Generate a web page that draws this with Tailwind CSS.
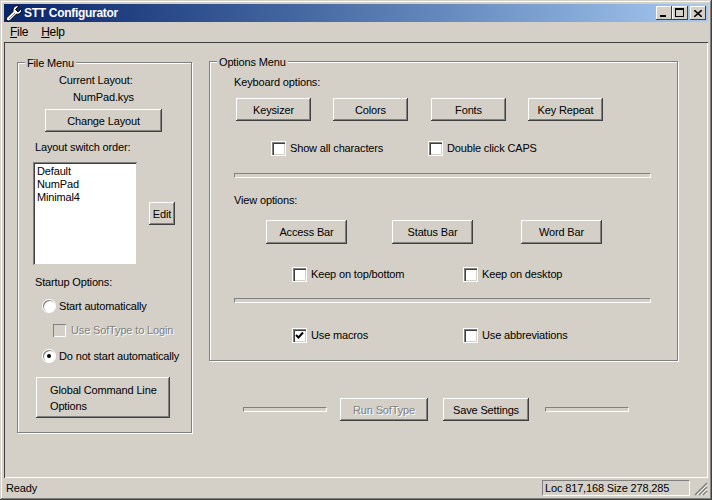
<!DOCTYPE html>
<html lang="en">
<head>
  <meta charset="UTF-8">
  <title>STT Configurator</title>
  <script src="https://cdn.jsdelivr.net/npm/@tailwindcss/browser@4"></script>
</head>
<body class="bg-[#d4d0c8] overflow-hidden">
<div class="w-[712px] h-[500px] flex flex-col p-[4px] bg-[#d4d0c8] text-black text-[11px] tracking-[-0.15px] leading-[16px] font-['Liberation_Sans',sans-serif] shadow-[inset_-1px_-1px_0_#404040,inset_1px_1px_0_#d4d0c8,inset_-2px_-2px_0_#808080,inset_2px_2px_0_#fff]">

  <!-- title bar -->
  <div class="h-[18px] flex items-center bg-gradient-to-r from-[#0a246a] to-[#a6caf0]">
    <svg class="w-[16px] h-[17px] ml-[2px]" viewBox="0 0 16 17">
      <path d="M15.500 3.500L12 7 9.500 4.500 13 1C10 0 6.500 2 7 6.500L1 12.500C-.5 14 1.500 17 4 15.500L10.500 9C13.500 10 16.500 7 15.500 3.500z" fill="#fff" stroke="#000" stroke-width="1"/>
      <path d="M3 14l6-6" stroke="#808080" stroke-width="1"/>
    </svg>
    <span class="ml-[2px] text-white font-bold text-[12px] tracking-[-0.3px]">STT Configurator</span>
    <div class="ml-auto mr-[2px] flex">
      <div class="w-[16px] h-[14px] flex items-end pl-[4px] pb-[3px] bg-[#d4d0c8] shadow-[inset_-1px_-1px_0_#404040,inset_1px_1px_0_#fff]"><div class="w-[6px] h-[2px] bg-black"></div></div>
      <div class="w-[16px] h-[14px] pt-[2px] pl-[3px] bg-[#d4d0c8] shadow-[inset_-1px_-1px_0_#404040,inset_1px_1px_0_#fff]"><div class="w-[9px] h-[9px] border border-black border-t-2"></div></div>
      <div class="ml-[2px] w-[16px] h-[14px] flex items-center justify-center bg-[#d4d0c8] shadow-[inset_-1px_-1px_0_#404040,inset_1px_1px_0_#fff]">
        <svg class="w-[8px] h-[7px]" viewBox="0 0 8 7"><path d="M0 0l8 7M8 0L0 7" stroke="#000" stroke-width="1.600"/></svg>
      </div>
    </div>
  </div>

  <!-- menu -->
  <div class="h-[20px] flex items-center pl-[6px] gap-[13px] text-[12px] tracking-[-0.3px]">
    <span><u>F</u>ile</span>
    <span><u>H</u>elp</span>
  </div>

  <!-- client area -->
  <div class="flex-1 flex items-start pl-[13px] shadow-[inset_1px_1px_0_#404040,inset_-1px_-1px_0_#fff]">

    <!-- File Menu -->
    <div class="relative mt-[20px] w-[175px] h-[371px] shrink-0 flex flex-col border border-[#808080] shadow-[inset_1px_1px_0_#fff,1px_1px_0_#fff]">
      <span class="absolute left-[7px] top-[-8px] px-[2px] bg-[#d4d0c8]">File Menu</span>
      <div class="mt-[9px] pl-[41px]">Current Layout:</div>
      <div class="mt-[1px] pl-[55px]">NumPad.kys</div>
      <button class="mt-[4px] ml-[27px] w-[117px] h-[23px] bg-[#d4d0c8] shadow-[inset_-1px_-1px_0_#404040,inset_1px_1px_0_#fff,inset_-2px_-2px_0_#808080]">Change Layout</button>
      <div class="mt-[7px] pl-[17px]">Layout switch order:</div>
      <div class="mt-[7px] flex items-center">
        <div class="ml-[15px] w-[104px] h-[103px] bg-white px-[4px] py-[3px] leading-[13px] shadow-[inset_1px_1px_0_#808080,inset_-1px_-1px_0_#d4d0c8,inset_2px_2px_0_#404040]">
          <div>Default</div>
          <div>NumPad</div>
          <div>Minimal4</div>
        </div>
        <button class="ml-[12px] w-[26px] h-[23px] bg-[#d4d0c8] shadow-[inset_-1px_-1px_0_#404040,inset_1px_1px_0_#fff,inset_-2px_-2px_0_#808080]">Edit</button>
      </div>
      <div class="mt-[9px] pl-[17px]">Startup Options:</div>
      <div class="mt-[8px] ml-[25px] flex items-center gap-[4px]">
        <div class="w-[12px] h-[12px] rounded-full bg-white shadow-[inset_1px_1px_0_#808080,0_0_0_1px_#fff]"></div>
        <span>Start automatically</span>
      </div>
      <div class="mt-[8px] ml-[35px] flex items-center gap-[5px] text-[#808080] [text-shadow:1px_1px_0_#fff]">
        <div class="w-[13px] h-[13px] bg-[#d4d0c8] shadow-[inset_1px_1px_0_#808080,inset_-1px_-1px_0_#fff]"></div>
        <span>Use SofType to Login</span>
      </div>
      <div class="mt-[10px] ml-[25px] flex items-center gap-[4px]">
        <div class="w-[12px] h-[12px] flex items-center justify-center rounded-full bg-white shadow-[inset_1px_1px_0_#808080,0_0_0_1px_#fff]"><div class="w-[4px] h-[4px] rounded-full bg-black"></div></div>
        <span>Do not start automatically</span>
      </div>
      <button class="mt-[13px] ml-[18px] w-[134px] h-[41px] pl-[14px] text-left bg-[#d4d0c8] shadow-[inset_-1px_-1px_0_#404040,inset_1px_1px_0_#fff,inset_-2px_-2px_0_#808080]">Global Command Line<br>Options</button>
    </div>

    <!-- right column -->
    <div class="ml-[17px] mt-[19px] flex flex-col">
      <div class="relative w-[469px] h-[300px] flex flex-col border border-[#808080] shadow-[inset_1px_1px_0_#fff,1px_1px_0_#fff]">
        <span class="absolute left-[7px] top-[-8px] px-[2px] bg-[#d4d0c8]">Options Menu</span>

        <div class="mt-[12px] pl-[24px]">Keyboard options:</div>
        <div class="mt-[8px] ml-[26px] flex">
          <button class="w-[75px] h-[23px] bg-[#d4d0c8] shadow-[inset_-1px_-1px_0_#404040,inset_1px_1px_0_#fff,inset_-2px_-2px_0_#808080]">Keysizer</button>
          <button class="ml-[22px] w-[75px] h-[23px] bg-[#d4d0c8] shadow-[inset_-1px_-1px_0_#404040,inset_1px_1px_0_#fff,inset_-2px_-2px_0_#808080]">Colors</button>
          <button class="ml-[23px] w-[75px] h-[23px] bg-[#d4d0c8] shadow-[inset_-1px_-1px_0_#404040,inset_1px_1px_0_#fff,inset_-2px_-2px_0_#808080]">Fonts</button>
          <button class="ml-[22px] w-[75px] h-[23px] bg-[#d4d0c8] shadow-[inset_-1px_-1px_0_#404040,inset_1px_1px_0_#fff,inset_-2px_-2px_0_#808080]">Key Repeat</button>
        </div>
        <div class="mt-[19px] ml-[62px] flex items-center">
          <div class="w-[13px] h-[13px] bg-white shadow-[inset_1px_1px_0_#808080,inset_2px_2px_0_#404040,inset_-1px_-1px_0_#d4d0c8,0_0_0_1px_#fff]"></div>
          <span class="ml-[5px] w-[139px]">Show all characters</span>
          <div class="w-[13px] h-[13px] bg-white shadow-[inset_1px_1px_0_#808080,inset_2px_2px_0_#404040,inset_-1px_-1px_0_#d4d0c8,0_0_0_1px_#fff]"></div>
          <span class="ml-[5px]">Double click CAPS</span>
        </div>
        <div class="mt-[17px] ml-[24px] w-[417px] h-[5px] border border-t-[#808080] border-l-[#808080] border-b-white border-r-white"></div>

        <div class="mt-[14px] pl-[24px]">View options:</div>
        <div class="mt-[12px] ml-[56px] flex">
          <button class="w-[81px] h-[24px] bg-[#d4d0c8] shadow-[inset_-1px_-1px_0_#404040,inset_1px_1px_0_#fff,inset_-2px_-2px_0_#808080]">Access Bar</button>
          <button class="ml-[45px] w-[81px] h-[24px] bg-[#d4d0c8] shadow-[inset_-1px_-1px_0_#404040,inset_1px_1px_0_#fff,inset_-2px_-2px_0_#808080]">Status Bar</button>
          <button class="ml-[48px] w-[81px] h-[24px] bg-[#d4d0c8] shadow-[inset_-1px_-1px_0_#404040,inset_1px_1px_0_#fff,inset_-2px_-2px_0_#808080]">Word Bar</button>
        </div>
        <div class="mt-[22px] ml-[83px] flex items-center">
          <div class="w-[13px] h-[13px] bg-white shadow-[inset_1px_1px_0_#808080,inset_2px_2px_0_#404040,inset_-1px_-1px_0_#d4d0c8,0_0_0_1px_#fff]"></div>
          <span class="ml-[5px] w-[153px]">Keep on top/bottom</span>
          <div class="w-[13px] h-[13px] bg-white shadow-[inset_1px_1px_0_#808080,inset_2px_2px_0_#404040,inset_-1px_-1px_0_#d4d0c8,0_0_0_1px_#fff]"></div>
          <span class="ml-[5px]">Keep on desktop</span>
        </div>
        <div class="mt-[16px] ml-[24px] w-[417px] h-[5px] border border-t-[#808080] border-l-[#808080] border-b-white border-r-white"></div>
        <div class="mt-[24px] ml-[83px] flex items-center">
          <div class="w-[13px] h-[13px] flex items-center justify-center bg-white shadow-[inset_1px_1px_0_#808080,inset_2px_2px_0_#404040,inset_-1px_-1px_0_#d4d0c8,0_0_0_1px_#fff]">
            <svg class="w-[9px] h-[9px]" viewBox="0 0 9 9"><path d="M1 4l2.500 2.500L8 1.500" fill="none" stroke="#000" stroke-width="2"/></svg>
          </div>
          <span class="ml-[5px] w-[153px]">Use macros</span>
          <div class="w-[13px] h-[13px] bg-white shadow-[inset_1px_1px_0_#808080,inset_2px_2px_0_#404040,inset_-1px_-1px_0_#d4d0c8,0_0_0_1px_#fff]"></div>
          <span class="ml-[5px]">Use abbreviations</span>
        </div>
      </div>

      <!-- bottom row -->
      <div class="mt-[37px] ml-[34px] flex items-center">
        <div class="w-[84px] h-[5px] border border-t-[#808080] border-l-[#808080] border-b-white border-r-white"></div>
        <button class="ml-[13px] w-[88px] h-[23px] text-[#808080] [text-shadow:1px_1px_0_#fff] bg-[#d4d0c8] shadow-[inset_-1px_-1px_0_#404040,inset_1px_1px_0_#fff,inset_-2px_-2px_0_#808080]">Run SofType</button>
        <button class="ml-[15px] w-[86px] h-[23px] bg-[#d4d0c8] shadow-[inset_-1px_-1px_0_#404040,inset_1px_1px_0_#fff,inset_-2px_-2px_0_#808080]">Save Settings</button>
        <div class="ml-[16px] w-[84px] h-[5px] border border-t-[#808080] border-l-[#808080] border-b-white border-r-white"></div>
      </div>
    </div>
  </div>

  <!-- status bar -->
  <div class="h-[18px] flex items-end">
    <span class="pl-[2px]">Ready</span>
    <div class="ml-auto w-[148px] h-[16px] pl-[2px] whitespace-nowrap leading-[15px] border border-t-[#808080] border-l-[#808080] border-b-white border-r-white">Loc 817,168 Size 278,285</div>
    <svg class="ml-[2px] w-[16px] h-[16px]" viewBox="0 0 16 16">
      <path d="M15 3L3 15M15 7L7 15M15 11L11 15" stroke="#808080" stroke-width="1.500"/>
      <path d="M15 5L5 15M15 9L9 15M15 13L13 15" stroke="#fff" stroke-width="1"/>
    </svg>
  </div>
</div>
</body>
</html>
